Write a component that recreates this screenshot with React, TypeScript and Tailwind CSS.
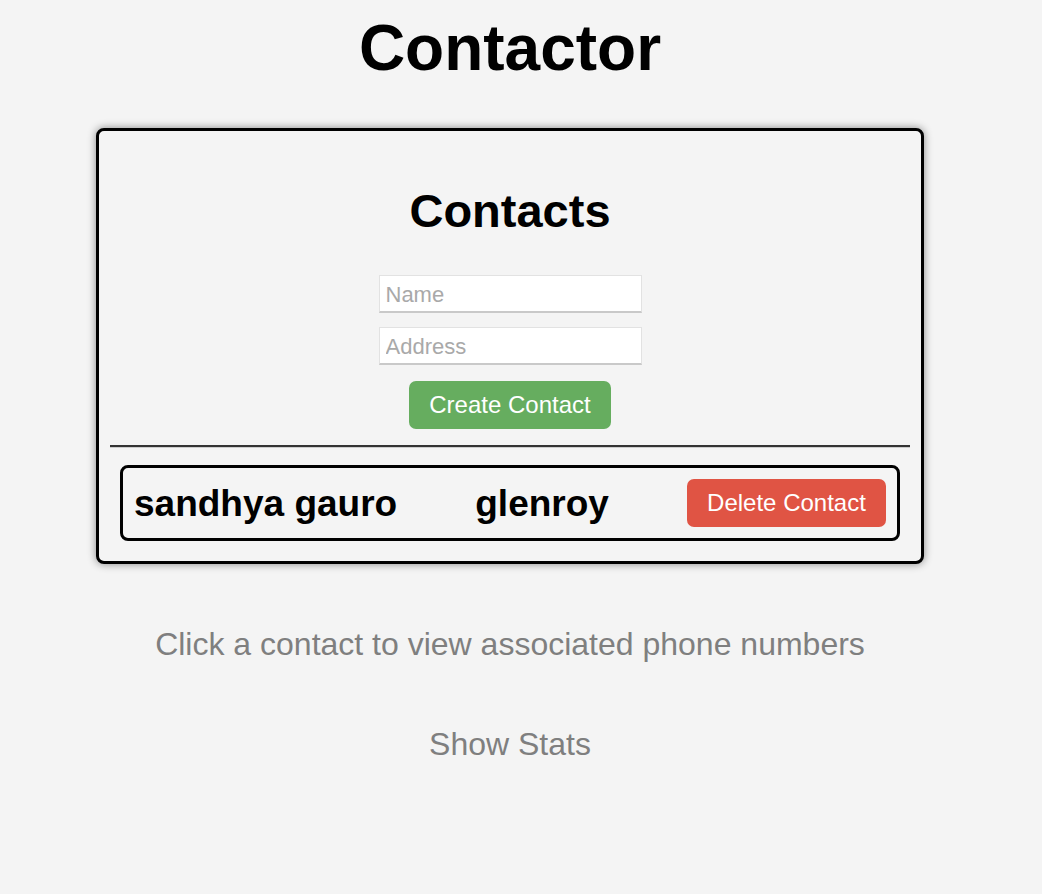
import { useState } from 'react';

type Contact = { id: number; name: string; address: string };

const App = () => {
    const [name, setName] = useState('');
    const [address, setAddress] = useState('');
    const [contacts, setContacts] = useState<Contact[]>([
        { id: 1, name: 'sandhya gauro', address: 'glenroy' },
    ]);

    const createContact = () => {
        if (!name.trim()) return;
        setContacts([...contacts, { id: Date.now(), name, address }]);
        setName('');
        setAddress('');
    };

    const deleteContact = (id: number) => {
        setContacts(contacts.filter((c) => c.id !== id));
    };

    return (
        <div className="min-h-screen w-full bg-[#f4f4f4] font-['Liberation_Sans',Arial,sans-serif] text-black">
            <div className="w-[1020px] flex flex-col items-center pt-[16px] pb-10">
                <h1 className="text-[64px] leading-[64px] font-bold">Contactor</h1>

                {/* Contacts panel */}
                <div className="mt-[48px] w-[828px] border-[3px] border-black rounded-[8px] shadow-[0_0_8px_rgba(0,0,0,0.45)] bg-[#f4f4f4] px-[11px] pt-[56px] pb-[20px] flex flex-col items-center">
                    <h2 className="text-[47px] leading-[47px] font-bold">Contacts</h2>

                    <div className="mt-[41px] flex flex-col items-center gap-[14px]">
                        <input
                            type="text"
                            placeholder="Name"
                            value={name}
                            onChange={(e) => setName(e.target.value)}
                            className="w-[263px] h-[38px] bg-white border border-[#e2e2e2] border-b-2 border-b-[#c9c9c9] px-[6px] pt-[3px] text-[22px] text-black placeholder-[#a9a9a9] outline-none"
                        />
                        <input
                            type="text"
                            placeholder="Address"
                            value={address}
                            onChange={(e) => setAddress(e.target.value)}
                            className="w-[263px] h-[38px] bg-white border border-[#e2e2e2] border-b-2 border-b-[#c9c9c9] px-[6px] pt-[3px] text-[22px] text-black placeholder-[#a9a9a9] outline-none"
                        />
                    </div>

                    <button
                        type="button"
                        onClick={createContact}
                        className="mt-[16px] w-[202px] h-[48px] rounded-[7px] bg-[#66ad5f] text-white text-[24px] leading-[48px]"
                    >
                        Create Contact
                    </button>

                    <div className="mt-[16px] w-full h-[3px] border-t-2 border-[#333333] border-b border-b-[#cccccc]" />

                    <div className="mt-[17px] w-full px-[10px] flex flex-col gap-3">
                        {contacts.map((c) => (
                            <div
                                key={c.id}
                                className="h-[76px] border-[3px] border-black rounded-[8px] px-[11px] flex items-center justify-between"
                            >
                                <span className="text-[37px] leading-[37px] font-bold">{c.name}</span>
                                <span className="text-[37px] leading-[37px] font-bold">{c.address}</span>
                                <button
                                    type="button"
                                    onClick={() => deleteContact(c.id)}
                                    className="w-[199px] h-[48px] rounded-[7px] bg-[#e05444] text-white text-[24px] leading-[48px]"
                                >
                                    Delete Contact
                                </button>
                            </div>
                        ))}
                    </div>
                </div>

                <p className="mt-[64px] text-[32px] leading-[32px] text-[#7f7f7f]">
                    Click a contact to view associated phone numbers
                </p>
                <p className="mt-[68px] text-[32px] leading-[32px] text-[#7f7f7f]">Show Stats</p>
            </div>
        </div>
    );
};

export default App;
